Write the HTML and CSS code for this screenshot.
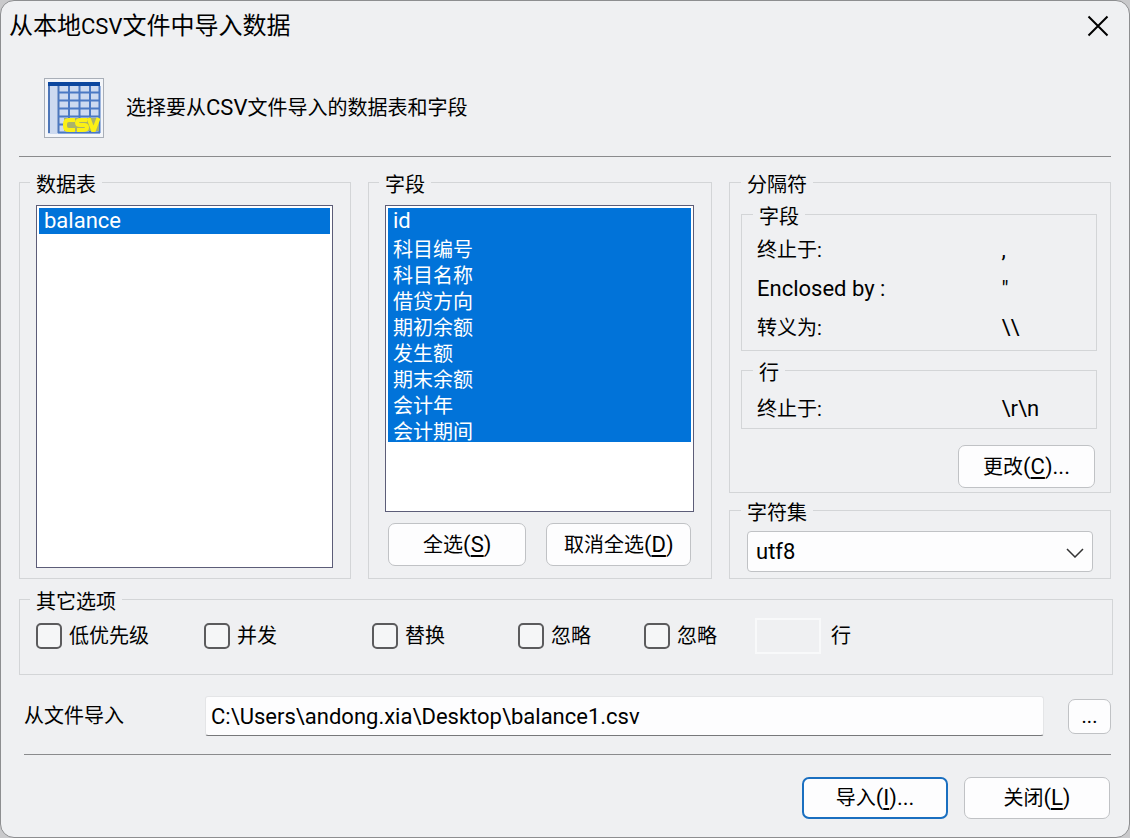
FILE: index.html
```
<!DOCTYPE html>
<html lang="zh-CN">
<head>
  <meta charset="UTF-8">
  <meta name="viewport" content="width=device-width, initial-scale=1.0">
  <title>从本地CSV文件中导入数据</title>
  <link rel="stylesheet" href="styles.css">
</head>
<body>
  <form class="dialog">
    <header class="titlebar">
      <h1>从本地<span class="en">CSV</span>文件中导入数据</h1>
      <button type="button" class="close-btn" aria-label="关闭">
        <svg width="22" height="22" viewBox="0 0 22 22"><path d="M1.500 1.500L20.500 20.500M20.500 1.500L1.500 20.500" stroke="#000" stroke-width="2" fill="none"/></svg>
      </button>
    </header>

    <div class="intro">
      <svg class="csv-icon" width="60" height="60" viewBox="0 0 60 60">
        <rect x="0.500" y="0.500" width="59" height="59" fill="#f4f6fa" stroke="#a9afb8"/>
        <rect x="4" y="4" width="52" height="52" fill="#cddaf0"/>
        <path d="M5 8v47M14.500 8v47" stroke="#4d76b8" stroke-width="2"/>
        <path d="M25 8v47M35.500 8v47M46 8v47M55.500 8v47" stroke="#4a79c4" stroke-width="2"/>
        <path d="M14 14.500h42M14 22.500h42M14 30.500h42M14 38.500h42M14 46.500h42M14 54.500h42" stroke="#4a79c4" stroke-width="2"/>
        <rect x="4" y="4" width="52" height="4" fill="#0c479f"/>
        <rect x="20" y="40" width="35" height="13" fill="#a9b26a"/>
        <path d="M31 42h-6q-4 0-4 4v2q0 4 4 4h6M43 42h-6q-4 0-4 2.500t3 2.500h4q3 0 3 2.500t-4 2.500h-6M44.500 40l4.500 12h1l4.500-12" fill="none" stroke="#fbf015" stroke-width="4"/>
      </svg>
      <p>选择要从<span class="en">CSV</span>文件导入的数据表和字段</p>
    </div>

    <div class="columns">
      <fieldset class="tables">
        <legend><label for="table-list">数据表</label></legend>
        <select id="table-list" class="list" multiple>
          <option selected class="en">balance</option>
        </select>
      </fieldset>

      <fieldset class="fields">
        <legend><label for="field-list">字段</label></legend>
        <select id="field-list" class="list" multiple>
          <option selected class="en">id</option>
          <option selected>科目编号</option>
          <option selected>科目名称</option>
          <option selected>借贷方向</option>
          <option selected>期初余额</option>
          <option selected>发生额</option>
          <option selected>期末余额</option>
          <option selected>会计年</option>
          <option selected>会计期间</option>
        </select>
        <div class="list-actions">
          <button type="button" class="btn">全选<span class="en">(<u>S</u>)</span></button>
          <button type="button" class="btn">取消全选<span class="en">(<u>D</u>)</span></button>
        </div>
      </fieldset>

      <div class="settings">
        <fieldset class="separators">
          <legend>分隔符</legend>
          <fieldset class="inner">
            <legend>字段</legend>
            <dl>
              <dt>终止于:</dt><dd>,</dd>
              <dt><span class="en">Enclosed by :</span></dt><dd>"</dd>
              <dt>转义为:</dt><dd>\\</dd>
            </dl>
          </fieldset>
          <fieldset class="inner line-end">
            <legend>行</legend>
            <dl>
              <dt>终止于:</dt><dd>\r\n</dd>
            </dl>
          </fieldset>
          <button type="button" class="btn change-btn">更改<span class="en">(<u>C</u>)...</span></button>
        </fieldset>

        <fieldset class="charset">
          <legend><label for="charset">字符集</label></legend>
          <div class="select-wrap">
            <select id="charset">
              <option>utf8</option>
            </select>
            <svg class="chevron" width="18" height="10" viewBox="0 0 18 10"><path d="M1 1l8 8 8-8" fill="none" stroke="#333" stroke-width="1.500"/></svg>
          </div>
        </fieldset>
      </div>
    </div>

    <fieldset class="options">
      <legend>其它选项</legend>
      <div class="option-row">
        <label><input type="checkbox">低优先级</label>
        <label><input type="checkbox">并发</label>
        <label><input type="checkbox">替换</label>
        <label><input type="checkbox">忽略</label>
        <label><input type="checkbox">忽略</label>
        <label class="lines"><input type="text" disabled>行</label>
      </div>
    </fieldset>

    <div class="file-row">
      <label for="file-path">从文件导入</label>
      <input type="text" id="file-path" value="C:\Users\andong.xia\Desktop\balance1.csv">
      <button type="button" class="btn browse-btn" aria-label="浏览">...</button>
    </div>

    <footer class="actions">
      <button type="submit" class="btn primary">导入<span class="en">(<u>I</u>)...</span></button>
      <button type="button" class="btn">关闭<span class="en">(<u>L</u>)</span></button>
    </footer>
  </form>
</body>
</html>
```
FILE: styles.css
```
* {
  margin: 0;
  padding: 0;
  box-sizing: border-box;
}

body {
  min-height: 100vh;
  display: flex;
  background: #c9c9cb;
  font-family: Roboto, "Noto Sans CJK SC", sans-serif;
  font-size: 20px;
  line-height: 20px;
  color: #000;
}

button,
input,
select {
  font: inherit;
  color: inherit;
}

.en {
  font-size: 22px;
}

.dialog {
  flex: 1;
  display: flex;
  flex-direction: column;
  background: #eff0f2;
  border: 1px solid #8d8e90;
  border-radius: 14px;
}

.titlebar {
  display: flex;
  justify-content: space-between;
  align-items: center;
  height: 50px;
  padding: 0 20px 0 8px;
}

.titlebar h1 {
  font-size: 24px;
  font-weight: 400;
}

.close-btn {
  display: flex;
  border: none;
  background: none;
}

.intro {
  display: flex;
  align-items: center;
  gap: 22px;
  margin: 0 18px;
  padding: 27px 0 18px 25px;
  border-bottom: 1px solid #8a8b8d;
}

fieldset {
  min-width: 0;
  border: 1px solid #d3d5d7;
}

legend {
  padding: 6px 6px 0;
  margin-left: -6px;
}

.columns {
  display: grid;
  grid-template-columns: 332fr 344fr 382fr;
  gap: 17px;
  margin: 12px 18px 0;
}

.tables,
.fields {
  display: flex;
  flex-direction: column;
  padding: 10px 17px 10px 16px;
}

.list {
  flex: 1;
  width: 100%;
  padding: 2px;
  border: 1px solid #5c5d78;
  border-radius: 0;
  background: #fff;
  outline: none;
  overflow: hidden;
}

.list option {
  height: 26px;
  min-height: 0;
  padding: 0 5px;
}

.list option:checked {
  background: #0173d9 linear-gradient(#0173d9, #0173d9);
  -webkit-text-fill-color: #fff;
}

.list-actions {
  display: grid;
  grid-template-columns: 138fr 144fr;
  gap: 20px;
  padding: 11px 3px 2px;
}

.btn {
  height: 43px;
  border: 1px solid #c0c2c5;
  border-radius: 7px;
  background: #fdfdfe;
}

.btn u {
  text-underline-offset: 3px;
}

.settings {
  display: flex;
  flex-direction: column;
  gap: 4px;
}

.separators {
  display: flex;
  flex-direction: column;
  gap: 6px;
  padding: 6px 13px 4px 11px;
}

.separators > legend {
  margin-left: 0;
}

.inner {
  padding: 3px 15px 3px;
}

.inner legend {
  margin-left: -4px;
}

.inner.line-end {
  padding: 6px 15px 0;
}

.inner dl {
  display: grid;
  grid-template-columns: 246fr 80fr;
  grid-auto-rows: 39px;
  align-items: center;
}

.inner dd {
  font-size: 22px;
}

.change-btn {
  width: 137px;
  margin: 10px 2px 0 auto;
}

.charset {
  padding: 8px 17px 6px;
}

.select-wrap {
  position: relative;
}

.select-wrap select {
  display: block;
  width: 100%;
  height: 41px;
  padding: 0 8px;
  border: 1px solid #c0c2c5;
  border-radius: 4px;
  background: #fdfdfe;
  font-size: 22px;
  appearance: none;
}

.chevron {
  position: absolute;
  right: 9px;
  top: 17px;
  pointer-events: none;
}

.options {
  margin: 7px 16px 0 18px;
  padding: 6px 16px 20px;
}

.option-row {
  display: grid;
  grid-template-columns: 168fr 168fr 146fr 126fr 111fr 341fr;
  align-items: center;
}

.option-row label {
  display: flex;
  align-items: center;
  gap: 7px;
}

.option-row input[type="checkbox"] {
  width: 26px;
  height: 26px;
  border: 2px solid #5b5b5d;
  border-radius: 5px;
  background: #f5f6f7;
  appearance: none;
}

.option-row .lines {
  gap: 10px;
}

.lines input {
  width: 66px;
  height: 36px;
  border: 2px solid #f8f9fa;
  background: #eff0f2;
}

.file-row {
  display: flex;
  align-items: center;
  margin: 21px 18px 0 23px;
  padding-bottom: 18px;
  border-bottom: 1px solid #8a8b8d;
}

.file-row label {
  width: 181px;
}

.file-row input {
  flex: 1;
  height: 40px;
  padding: 0 5px;
  border: 1px solid #e4e5e7;
  border-bottom-color: #77787a;
  border-radius: 3px;
  background: #fdfdfe;
  font-size: 22px;
}

.browse-btn {
  width: 43px;
  height: 35px;
  margin-left: 24px;
}

.actions {
  display: flex;
  justify-content: flex-end;
  gap: 16px;
  padding: 22px 19px 18px;
}

.actions .btn {
  width: 146px;
  height: 42px;
}

.actions .primary {
  border: 2px solid #1a6fc0;
}
```
